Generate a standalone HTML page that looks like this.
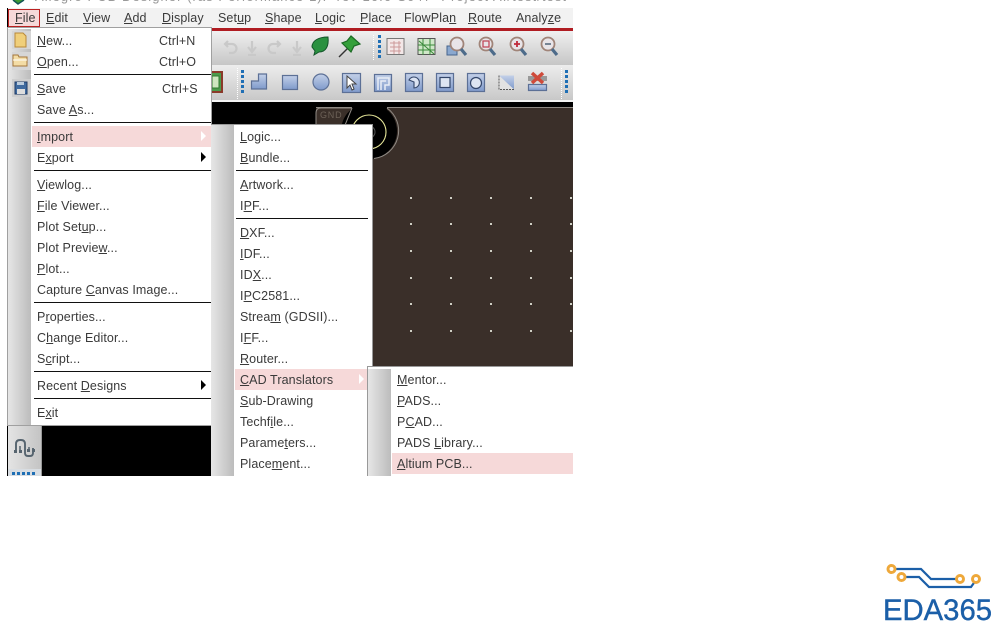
<!DOCTYPE html>
<html><head><meta charset="utf-8"><style>
html,body{margin:0;padding:0;background:#fff}
#r{position:relative;width:1008px;height:630px;overflow:hidden;background:#fff;font-family:"Liberation Sans",sans-serif;font-size:12.5px;color:#3a3a3a}
.a{position:absolute}
.t{position:absolute;white-space:pre;line-height:16px;height:16px;letter-spacing:.1px;filter:blur(.3px)}
.s{position:absolute;height:1px;background:#111}
.g{position:absolute;background:linear-gradient(90deg,#e6e6e6,#bcbcbc)}
.m{position:absolute;background:#fff;box-shadow:0 0 0 1px #a0a0a0}
.h{position:absolute;background:#f6d9d9}
svg{position:absolute;overflow:visible}
</style></head><body><div id="r">
<div class="a" style="left:7px;top:8px;width:566px;height:468px;background:#000"></div>
<div class="a" style="left:8px;top:0;width:565px;height:8px;background:#fff;overflow:hidden"><div class="t" style="left:27px;top:-11px;color:#999;font-size:13px;letter-spacing:1.05px">Allegro PCB Designer (ras Performance L):  rev 16.6-S047  Project A:/test/test-1074/test</div></div>
<svg style="left:10px;top:0" width="20" height="5"><path d="M3 0 L8 4 L14 0" fill="#3c9a35" stroke="#155" stroke-width="1.5"/></svg>
<div class="a" style="left:8px;top:8px;width:565px;height:20px;background:#f2f2f2"></div>
<div class="a" style="left:8px;top:28px;width:565px;height:3px;background:#b01c22"></div>
<div class="a" style="left:8px;top:31px;width:565px;height:34px;background:linear-gradient(#f0f0f0,#c6c6c6)"></div>
<div class="a" style="left:8px;top:65px;width:565px;height:35px;background:linear-gradient(#ededed,#c8c8c8)"></div>
<div class="a" style="left:8px;top:100px;width:565px;height:2px;background:#f4f4f4"></div>
<div class="a" style="left:8px;top:9px;width:30px;height:16px;background:#f6d9d9;border:1px solid #b22"></div>
<div class="t" style="left:15px;top:10px"><u>F</u>ile</div>
<div class="t" style="left:46px;top:10px"><u>E</u>dit</div>
<div class="t" style="left:83px;top:10px"><u>V</u>iew</div>
<div class="t" style="left:124px;top:10px"><u>A</u>dd</div>
<div class="t" style="left:162px;top:10px"><u>D</u>isplay</div>
<div class="t" style="left:218px;top:10px">Set<u>u</u>p</div>
<div class="t" style="left:265px;top:10px"><u>S</u>hape</div>
<div class="t" style="left:315px;top:10px"><u>L</u>ogic</div>
<div class="t" style="left:360px;top:10px"><u>P</u>lace</div>
<div class="t" style="left:404px;top:10px">FlowPla<u>n</u></div>
<div class="t" style="left:468px;top:10px"><u>R</u>oute</div>
<div class="t" style="left:516px;top:10px">Analy<u>z</u>e</div>

<!-- toolbars -->
<svg style="left:0;top:0" width="573" height="102">
<g fill="none" stroke="#c9c9c9" stroke-width="2.2"><path d="M225 44h7a4.500 4.500 0 0 1 0 9h-3M228 41l-3 3 3 3"/><path d="M252 41v10M248 47l4 5 4-5M248 55h8"/><path d="M280 44h-7a4.500 4.500 0 0 0 0 9h3M277 41l3 3-3 3"/><path d="M297 41v10M293 47l4 5 4-5M293 55h8"/></g>
<path d="M312 47c0-6 6-10 16-10 1 9-2 15-9 15l-5 3 1-4z" fill="#2a9140" stroke="#14552a"/>
<path d="M339 57l10-10" stroke="#333" stroke-width="1.4"/>
<path d="M351 36l9 8-6 2-3 6-9-9 5-2z" fill="#34a03a" stroke="#1c6a25" stroke-width="1.2"/>
<g fill="#1f6fb5"><rect x="378" y="35" width="3" height="3"/><rect x="378" y="40" width="3" height="3"/><rect x="378" y="45" width="3" height="3"/><rect x="378" y="50" width="3" height="3"/><rect x="378" y="55" width="3" height="3"/>
<rect x="241" y="70" width="3" height="3"/><rect x="241" y="75" width="3" height="3"/><rect x="241" y="80" width="3" height="3"/><rect x="241" y="85" width="3" height="3"/><rect x="241" y="90" width="3" height="3"/>
<rect x="565" y="70" width="3" height="3"/><rect x="565" y="75" width="3" height="3"/><rect x="565" y="80" width="3" height="3"/><rect x="565" y="85" width="3" height="3"/><rect x="565" y="90" width="3" height="3"/></g>
<rect x="387" y="38.500" width="17" height="16" fill="#f3e7e7" stroke="#777"/><path d="M390 43h11M390 47h11M390 51h11M394 41v13M399 41v13" stroke="#c99" fill="none"/>
<rect x="418" y="38.500" width="17" height="16" fill="#cfe8c8" stroke="#555"/><path d="M418 45h17M418 50h17M423 39v16M430 39v16M419 41l15 13" stroke="#3a8a3a" fill="none"/>
<rect x="447" y="46" width="10" height="9" fill="#8aa8cf" stroke="#46648c"/>
<g fill="#e8e4e8" stroke="#a08478" stroke-width="1.8"><circle cx="457" cy="44" r="6.500"/><circle cx="486" cy="44" r="6.500"/><circle cx="517" cy="44" r="6.500"/><circle cx="548" cy="44" r="6.500"/></g>
<g stroke="#4d6b8a" stroke-width="3.2"><path d="M461 49l5 6M490 49l5 6M521 49l5 6M552 49l5 6"/></g>
<rect x="483" y="41" width="6" height="6" fill="none" stroke="#c04a5a" stroke-width="1.3"/>
<path d="M514 44h6M517 41v6" stroke="#c02a3a" stroke-width="1.8"/><path d="M545 44h6" stroke="#6a7a8a" stroke-width="1.8"/>
<rect x="209" y="72" width="13" height="20" fill="#4c9b4c" stroke="#8a3a2a" stroke-width="2"/><rect x="212" y="76" width="7" height="12" fill="#cfe6c0" stroke="#2f7a2f"/>
<defs><linearGradient id="b" x1="0" y1="0" x2="0" y2="1"><stop offset="0" stop-color="#c3d0e8"/><stop offset="1" stop-color="#7f9acb"/></linearGradient></defs>
<g fill="url(#b)" stroke="#5c7096" stroke-width="1.2">
<path d="M251.500 89v-8h7v-7h8v15z"/>
<rect x="282.500" y="75.500" width="15" height="14"/>
<circle cx="321" cy="82" r="8"/>
<rect x="342.500" y="73.500" width="18" height="19"/>
<rect x="374.500" y="74.500" width="17" height="17"/>
<rect x="405.500" y="73.500" width="17" height="18"/>
<rect x="436.500" y="73.500" width="17" height="18"/>
<rect x="467.500" y="73.500" width="17" height="18"/>
<path d="M499 75.500h15v14z" stroke="none"/>
<rect x="528.500" y="84.500" width="18" height="6"/>
</g>
<path d="M347 76l0 12 3-3 2 5 2-1-2-5h4z" fill="#fff" stroke="#444"/>
<path d="M378 90v-12h11v7h-4v5M381 90v-9h5" fill="none" stroke="#e8edf6" stroke-width="1.5"/>
<path d="M409 80a5.500 5.500 0 1 1 5 8v-6z" fill="#dbe3f2" stroke="#33466a" stroke-width="1.1"/>
<rect x="440" y="77.500" width="10" height="10" fill="#dde5f2" stroke="#33466a" stroke-width="1.2"/>
<circle cx="476" cy="83" r="5.500" fill="#dde5f2" stroke="#33466a" stroke-width="1.2"/>
<path d="M499 75.500l15 14h-15z" fill="#e2e2e2"/><path d="M499 75.500v14h15" fill="none" stroke="#555" stroke-dasharray="2 1"/>
<rect x="528" y="76" width="19" height="5" fill="#999"/>
<path d="M532 73l11 10M543 73l-11 10" stroke="#cf4a3a" stroke-width="3.5"/>
<g stroke="#fff" stroke-dasharray="1 1"><path d="M373.500 35v25M237.500 68v31M561.500 68v31"/></g>
</svg>

<!-- canvas board -->
<div class="a" style="left:216px;top:102px;width:357px;height:264px;background:#000"></div>
<div class="a" style="left:316px;top:107px;width:257px;height:259px;background:#3a2f29;border-top:1px solid #8f8a84;box-sizing:border-box"></div>
<svg style="left:300px;top:100px" width="273" height="70">
<path d="M52 7 H87 V31 H40 Z" fill="#000"/>
<path d="M52 7 L36 50 H60 V24 Z" fill="#000"/>
<circle cx="69" cy="31" r="28" fill="#000"/>
<path d="M87 8 A28 28 0 0 1 74 58.500" fill="none" stroke="#8f8a84"/>
<path d="M52 8 L21 8 Q16 8 16 13 L16 30" fill="none" stroke="#8f8a84"/>
<path d="M52 8 L43 30" fill="none" stroke="#8f8a84"/>
<text x="20" y="18" font-size="9" letter-spacing=".8" fill="#6d6258" font-family="Liberation Sans">GND</text>
<circle cx="69" cy="32" r="17" fill="none" stroke="#e8e89a" stroke-width="1.1"/>
<circle cx="69" cy="32" r="6" fill="none" stroke="#555"/>
</svg>
<svg style="left:400px;top:190px" width="173" height="150"><g fill="#cfcfc4">
<rect x="10" y="7" width="2" height="2"/><rect x="50" y="7" width="2" height="2"/><rect x="90" y="7" width="2" height="2"/><rect x="130" y="7" width="2" height="2"/><rect x="170" y="7" width="2" height="2"/>
<rect x="10" y="33" width="2" height="2"/><rect x="50" y="33" width="2" height="2"/><rect x="90" y="33" width="2" height="2"/><rect x="130" y="33" width="2" height="2"/><rect x="170" y="33" width="2" height="2"/>
<rect x="10" y="60" width="2" height="2"/><rect x="50" y="60" width="2" height="2"/><rect x="90" y="60" width="2" height="2"/><rect x="130" y="60" width="2" height="2"/><rect x="170" y="60" width="2" height="2"/>
<rect x="10" y="87" width="2" height="2"/><rect x="50" y="87" width="2" height="2"/><rect x="90" y="87" width="2" height="2"/><rect x="130" y="87" width="2" height="2"/><rect x="170" y="87" width="2" height="2"/>
<rect x="10" y="113" width="2" height="2"/><rect x="50" y="113" width="2" height="2"/><rect x="90" y="113" width="2" height="2"/><rect x="130" y="113" width="2" height="2"/><rect x="170" y="113" width="2" height="2"/>
<rect x="10" y="140" width="2" height="2"/><rect x="50" y="140" width="2" height="2"/><rect x="90" y="140" width="2" height="2"/><rect x="130" y="140" width="2" height="2"/><rect x="170" y="140" width="2" height="2"/>
</g></svg>

<!-- left toolbar bottom -->
<div class="a" style="left:8px;top:426px;width:33px;height:50px;background:linear-gradient(90deg,#e4e4e4,#c4c4c4);border-right:1px solid #999"></div>
<svg style="left:0;top:0" width="60" height="476">
<path d="M16 451v-7q0-4 4-4h1q4 0 4 4v9q0 3 3 3h2q3 0 3-3v-5" fill="none" stroke="#56646f" stroke-width="1.9"/>
<path d="M20 446v4M29 447v4" stroke="#56646f" stroke-width="1.5" fill="none"/>
<g fill="#56646f"><rect x="14" y="450" width="3" height="3"/><rect x="19" y="450" width="3" height="3"/><rect x="27" y="449" width="3" height="3"/><rect x="32" y="449" width="3" height="3"/></g>
<rect x="8" y="469" width="33" height="7" fill="#d8dde2"/>
<g fill="#1f6fb5"><rect x="12" y="472" width="3" height="3"/><rect x="17" y="472" width="3" height="3"/><rect x="22" y="472" width="3" height="3"/><rect x="27" y="472" width="3" height="3"/><rect x="32" y="472" width="3" height="3"/></g>
</svg>

<!-- File menu -->
<div class="m" style="left:8px;top:28px;width:203px;height:397px"></div>
<div class="g" style="left:8px;top:29px;width:23px;height:396px"></div>
<svg style="left:10px;top:30px" width="22" height="70">
<rect x="2" y="1" width="19" height="18" fill="#d6d6d6"/><rect x="2" y="22" width="19" height="18" fill="#d6d6d6"/><rect x="2" y="49" width="19" height="18" fill="#cecece"/>
<path d="M5 3h8l3 3v11H5z" fill="#f0cf7a" stroke="#b9893a"/>
<path d="M3 25h5l1 2h8v9H3z" fill="#f3dca5" stroke="#a5773a"/><path d="M3 30h14" stroke="#fff"/>
<rect x="5" y="52" width="12" height="12" fill="#3f6a9f" stroke="#1e3a66"/><rect x="7" y="59" width="8" height="5" fill="#ddd"/><rect x="7" y="52" width="7" height="3" fill="#bcd"/>
</svg>
<div class="t" style="left:37px;top:33px"><u>N</u>ew...</div><div class="t" style="left:159px;top:33px">Ctrl+N</div>
<div class="t" style="left:37px;top:54px"><u>O</u>pen...</div><div class="t" style="left:159px;top:54px">Ctrl+O</div>
<div class="s" style="left:34px;top:74px;width:177px"></div>
<div class="t" style="left:37px;top:81px"><u>S</u>ave</div><div class="t" style="left:162px;top:81px">Ctrl+S</div>
<div class="t" style="left:37px;top:102px">Save <u>A</u>s...</div>
<div class="s" style="left:34px;top:122px;width:177px"></div>
<div class="h" style="left:32px;top:126px;width:179px;height:21px"></div>
<div class="t" style="left:37px;top:129px"><u>I</u>mport</div>
<div class="t" style="left:37px;top:150px">E<u>x</u>port</div>
<svg style="left:200px;top:131px" width="8" height="32"><path d="M1 0l5 5-5 5z" fill="#fff"/><path d="M1 21l5 5-5 5z" fill="#000"/></svg>
<div class="s" style="left:34px;top:170px;width:177px"></div>
<div class="t" style="left:37px;top:177px"><u>V</u>iewlog...</div>
<div class="t" style="left:37px;top:198px"><u>F</u>ile Viewer...</div>
<div class="t" style="left:37px;top:219px">Plot Set<u>u</u>p...</div>
<div class="t" style="left:37px;top:240px">Plot Previe<u>w</u>...</div>
<div class="t" style="left:37px;top:261px"><u>P</u>lot...</div>
<div class="t" style="left:37px;top:282px">Capture <u>C</u>anvas Image...</div>
<div class="s" style="left:34px;top:302px;width:177px"></div>
<div class="t" style="left:37px;top:309px">P<u>r</u>operties...</div>
<div class="t" style="left:37px;top:330px">C<u>h</u>ange Editor...</div>
<div class="t" style="left:37px;top:351px">S<u>c</u>ript...</div>
<div class="s" style="left:34px;top:371px;width:177px"></div>
<div class="t" style="left:37px;top:378px">Recent <u>D</u>esigns</div>
<svg style="left:200px;top:379px" width="8" height="12"><path d="M1 1l5 5-5 5z" fill="#000"/></svg>
<div class="s" style="left:34px;top:398px;width:177px"></div>
<div class="t" style="left:37px;top:405px">E<u>x</u>it</div>

<!-- Import submenu -->
<div class="a" style="left:211px;top:124px;width:162px;height:352px;background:#fff;border-top:1px solid #999;border-right:1px solid #999;box-sizing:border-box"></div>
<div class="g" style="left:211px;top:125px;width:23px;height:351px"></div>
<div class="t" style="left:240px;top:129px"><u>L</u>ogic...</div>
<div class="t" style="left:240px;top:150px"><u>B</u>undle...</div>
<div class="s" style="left:236px;top:170px;width:132px"></div>
<div class="t" style="left:240px;top:177px"><u>A</u>rtwork...</div>
<div class="t" style="left:240px;top:198px">I<u>P</u>F...</div>
<div class="s" style="left:236px;top:218px;width:132px"></div>
<div class="t" style="left:240px;top:225px"><u>D</u>XF...</div>
<div class="t" style="left:240px;top:246px"><u>I</u>DF...</div>
<div class="t" style="left:240px;top:267px">ID<u>X</u>...</div>
<div class="t" style="left:240px;top:288px">I<u>P</u>C2581...</div>
<div class="t" style="left:240px;top:309px">Strea<u>m</u> (GDSII)...</div>
<div class="t" style="left:240px;top:330px">I<u>F</u>F...</div>
<div class="t" style="left:240px;top:351px"><u>R</u>outer...</div>
<div class="h" style="left:235px;top:369px;width:137px;height:21px"></div>
<div class="t" style="left:240px;top:372px"><u>C</u>AD Translators</div>
<svg style="left:358px;top:374px" width="8" height="12"><path d="M1 0l5 5-5 5z" fill="#fff"/></svg>
<div class="t" style="left:240px;top:393px"><u>S</u>ub-Drawing</div>
<div class="t" style="left:240px;top:414px">Techf<u>i</u>le...</div>
<div class="t" style="left:240px;top:435px">Parame<u>t</u>ers...</div>
<div class="t" style="left:240px;top:456px">Place<u>m</u>ent...</div>

<!-- CAD submenu -->
<div class="a" style="left:367px;top:366px;width:206px;height:110px;background:#fff;border-top:1px solid #999;border-left:1px solid #999;box-sizing:border-box"></div>
<div class="g" style="left:368px;top:369px;width:23px;height:107px"></div>
<div class="t" style="left:397px;top:372px"><u>M</u>entor...</div>
<div class="t" style="left:397px;top:393px"><u>P</u>ADS...</div>
<div class="t" style="left:397px;top:414px">P<u>C</u>AD...</div>
<div class="t" style="left:397px;top:435px">PADS <u>L</u>ibrary...</div>
<div class="h" style="left:392px;top:453px;width:181px;height:21px"></div>
<div class="t" style="left:397px;top:456px"><u>A</u>ltium PCB...</div>

<!-- logo -->
<svg style="left:870px;top:555px" width="138" height="75">
<g transform="translate(-870,-555)">
<path d="M892 569H921L931 579H960" fill="none" stroke="#1b5fa8" stroke-width="2.2"/>
<path d="M902 577H919L929 587H971L976 580" fill="none" stroke="#1b5fa8" stroke-width="2.2"/>
<g fill="#fff" stroke="#eea83a" stroke-width="3"><circle cx="891.500" cy="569" r="3.500"/><circle cx="901.500" cy="577" r="3.500"/><circle cx="960" cy="579" r="3.500"/><circle cx="976" cy="579" r="3.500"/></g>
<text x="883" y="620" font-size="30" font-family="Liberation Sans" fill="#1b5fa8" stroke="#1b5fa8" stroke-width=".4" textLength="109" lengthAdjust="spacingAndGlyphs">EDA365</text>
</g></svg>
</div></body></html>
